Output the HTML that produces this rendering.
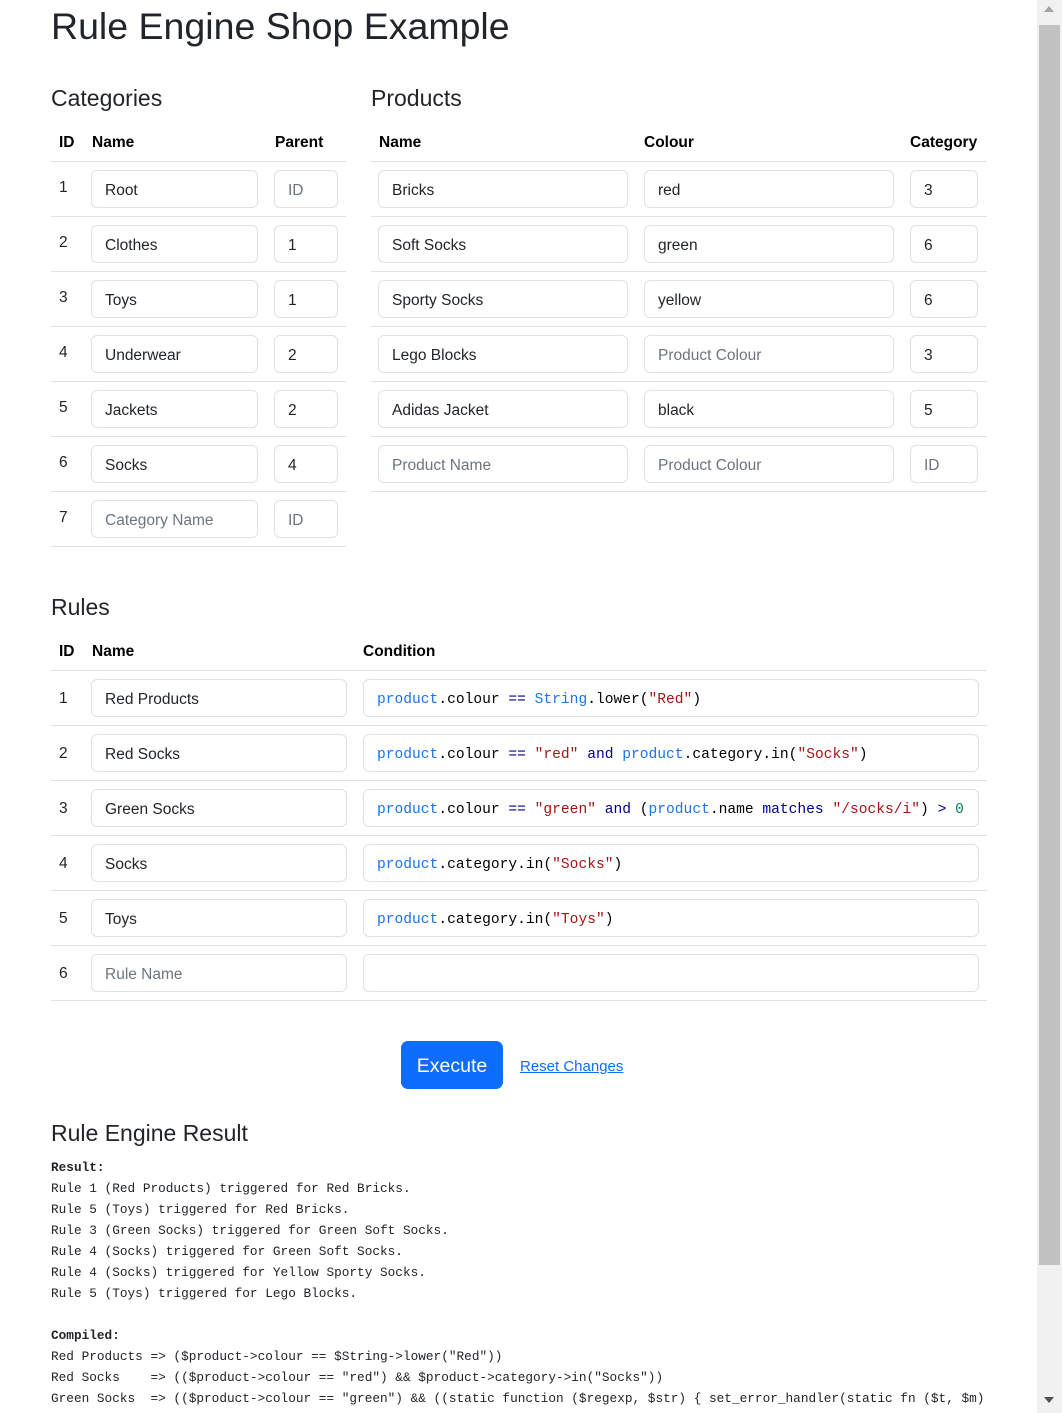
<!DOCTYPE html>
<html><head><meta charset="utf-8"><style>
body{margin:0;width:1062px;height:1413px;overflow:hidden;background:#fff;font-family:"Liberation Sans",sans-serif;color:#212529;position:relative}
.a{position:absolute;white-space:nowrap}
.in{position:absolute;height:38px;border:1px solid #dee2e6;border-radius:6px;box-sizing:border-box;padding:1px 13px 0;line-height:38px;font-size:15.5px;color:#212529;white-space:nowrap;overflow:hidden}
.ph{color:#6c757d}
.hr{position:absolute;height:1px;background:#dee2e6}
.th{position:absolute;font-weight:bold;font-size:15.5px;line-height:20px;color:#000}
.id{position:absolute;font-size:15.5px;line-height:20px}
h2{position:absolute;margin:0;font-weight:normal;font-size:23px;line-height:30px}
.code{font-family:"Liberation Mono",monospace;font-size:14.6px;color:#000}
.v{color:#1a73e8}.o{color:#00008b}.s{color:#a31515}.n{color:#098658}
pre{position:absolute;margin:0;font-family:"Liberation Mono",monospace;font-size:12.75px;line-height:21px;color:#212529}
</style></head><body>
<div class="a" style="left:51px;top:3px;font-size:37.5px;line-height:46px;font-weight:500">Rule Engine Shop Example</div>

<h2 style="left:51px;top:83px">Categories</h2>
<h2 style="left:371px;top:83px">Products</h2>

<div class="th" style="left:59px;top:133px">ID</div>
<div class="th" style="left:92px;top:133px">Name</div>
<div class="th" style="left:275px;top:133px">Parent</div>
<div class="hr" style="left:51px;width:295px;top:161px"></div>
<div class="hr" style="left:51px;width:295px;top:216px"></div>
<div class="hr" style="left:51px;width:295px;top:271px"></div>
<div class="hr" style="left:51px;width:295px;top:326px"></div>
<div class="hr" style="left:51px;width:295px;top:381px"></div>
<div class="hr" style="left:51px;width:295px;top:436px"></div>
<div class="hr" style="left:51px;width:295px;top:491px"></div>
<div class="hr" style="left:51px;width:295px;top:546px"></div>

<div class="id" style="left:59px;top:178px">1</div><div class="in" style="left:91px;width:167px;top:170px">Root</div><div class="in ph" style="left:274px;width:64px;top:170px">ID</div>
<div class="id" style="left:59px;top:233px">2</div><div class="in" style="left:91px;width:167px;top:225px">Clothes</div><div class="in" style="left:274px;width:64px;top:225px">1</div>
<div class="id" style="left:59px;top:288px">3</div><div class="in" style="left:91px;width:167px;top:280px">Toys</div><div class="in" style="left:274px;width:64px;top:280px">1</div>
<div class="id" style="left:59px;top:343px">4</div><div class="in" style="left:91px;width:167px;top:335px">Underwear</div><div class="in" style="left:274px;width:64px;top:335px">2</div>
<div class="id" style="left:59px;top:398px">5</div><div class="in" style="left:91px;width:167px;top:390px">Jackets</div><div class="in" style="left:274px;width:64px;top:390px">2</div>
<div class="id" style="left:59px;top:453px">6</div><div class="in" style="left:91px;width:167px;top:445px">Socks</div><div class="in" style="left:274px;width:64px;top:445px">4</div>
<div class="id" style="left:59px;top:508px">7</div><div class="in ph" style="left:91px;width:167px;top:500px">Category Name</div><div class="in ph" style="left:274px;width:64px;top:500px">ID</div>

<div class="th" style="left:379px;top:133px">Name</div>
<div class="th" style="left:644px;top:133px">Colour</div>
<div class="th" style="left:910px;top:133px">Category</div>
<div class="hr" style="left:371px;width:616px;top:161px"></div>
<div class="hr" style="left:371px;width:616px;top:216px"></div>
<div class="hr" style="left:371px;width:616px;top:271px"></div>
<div class="hr" style="left:371px;width:616px;top:326px"></div>
<div class="hr" style="left:371px;width:616px;top:381px"></div>
<div class="hr" style="left:371px;width:616px;top:436px"></div>
<div class="hr" style="left:371px;width:616px;top:491px"></div>

<div class="in" style="left:378px;width:250px;top:170px">Bricks</div><div class="in" style="left:644px;width:250px;top:170px">red</div><div class="in" style="left:910px;width:68px;top:170px">3</div>
<div class="in" style="left:378px;width:250px;top:225px">Soft Socks</div><div class="in" style="left:644px;width:250px;top:225px">green</div><div class="in" style="left:910px;width:68px;top:225px">6</div>
<div class="in" style="left:378px;width:250px;top:280px">Sporty Socks</div><div class="in" style="left:644px;width:250px;top:280px">yellow</div><div class="in" style="left:910px;width:68px;top:280px">6</div>
<div class="in" style="left:378px;width:250px;top:335px">Lego Blocks</div><div class="in ph" style="left:644px;width:250px;top:335px">Product Colour</div><div class="in" style="left:910px;width:68px;top:335px">3</div>
<div class="in" style="left:378px;width:250px;top:390px">Adidas Jacket</div><div class="in" style="left:644px;width:250px;top:390px">black</div><div class="in" style="left:910px;width:68px;top:390px">5</div>
<div class="in ph" style="left:378px;width:250px;top:445px">Product Name</div><div class="in ph" style="left:644px;width:250px;top:445px">Product Colour</div><div class="in ph" style="left:910px;width:68px;top:445px">ID</div>

<h2 style="left:51px;top:592px">Rules</h2>
<div class="th" style="left:59px;top:642px">ID</div>
<div class="th" style="left:92px;top:642px">Name</div>
<div class="th" style="left:363px;top:642px">Condition</div>
<div class="hr" style="left:51px;width:936px;top:670px"></div>
<div class="hr" style="left:51px;width:936px;top:725px"></div>
<div class="hr" style="left:51px;width:936px;top:780px"></div>
<div class="hr" style="left:51px;width:936px;top:835px"></div>
<div class="hr" style="left:51px;width:936px;top:890px"></div>
<div class="hr" style="left:51px;width:936px;top:945px"></div>
<div class="hr" style="left:51px;width:936px;top:1000px"></div>

<div class="id" style="left:59px;top:689px">1</div><div class="in" style="left:91px;width:256px;top:679px">Red Products</div>
<div class="in code" style="left:363px;width:616px;top:679px"><span class="v">product</span>.colour <span class="o">==</span> <span class="v">String</span>.lower(<span class="s">"Red"</span>)</div>
<div class="id" style="left:59px;top:744px">2</div><div class="in" style="left:91px;width:256px;top:734px">Red Socks</div>
<div class="in code" style="left:363px;width:616px;top:734px"><span class="v">product</span>.colour <span class="o">==</span> <span class="s">"red"</span> <span class="o">and</span> <span class="v">product</span>.category.in(<span class="s">"Socks"</span>)</div>
<div class="id" style="left:59px;top:799px">3</div><div class="in" style="left:91px;width:256px;top:789px">Green Socks</div>
<div class="in code" style="left:363px;width:616px;top:789px"><span class="v">product</span>.colour <span class="o">==</span> <span class="s">"green"</span> <span class="o">and</span> (<span class="v">product</span>.name <span class="o">matches</span> <span class="s">"/socks/i"</span>) <span class="o">&gt;</span> <span class="n">0</span></div>
<div class="id" style="left:59px;top:854px">4</div><div class="in" style="left:91px;width:256px;top:844px">Socks</div>
<div class="in code" style="left:363px;width:616px;top:844px"><span class="v">product</span>.category.in(<span class="s">"Socks"</span>)</div>
<div class="id" style="left:59px;top:909px">5</div><div class="in" style="left:91px;width:256px;top:899px">Toys</div>
<div class="in code" style="left:363px;width:616px;top:899px"><span class="v">product</span>.category.in(<span class="s">"Toys"</span>)</div>
<div class="id" style="left:59px;top:964px">6</div><div class="in ph" style="left:91px;width:256px;top:954px">Rule Name</div>
<div class="in code" style="left:363px;width:616px;top:954px"></div>

<div class="a" style="left:401px;top:1041px;width:102px;height:48px;background:#0d6efd;border-radius:7px;color:#fff;font-size:19.5px;line-height:50px;text-align:center">Execute</div>
<div class="a" style="left:520px;top:1057px;font-size:15px;line-height:20px;color:#0d6efd;text-decoration:underline">Reset Changes</div>

<h2 style="left:51px;top:1118px">Rule Engine Result</h2>
<pre style="left:51px;top:1157px"><b>Result:</b>
Rule 1 (Red Products) triggered for Red Bricks.
Rule 5 (Toys) triggered for Red Bricks.
Rule 3 (Green Socks) triggered for Green Soft Socks.
Rule 4 (Socks) triggered for Green Soft Socks.
Rule 4 (Socks) triggered for Yellow Sporty Socks.
Rule 5 (Toys) triggered for Lego Blocks.

<b>Compiled:</b>
Red Products =&gt; ($product-&gt;colour == $String-&gt;lower("Red"))
Red Socks    =&gt; (($product-&gt;colour == "red") &amp;&amp; $product-&gt;category-&gt;in("Socks"))
Green Socks  =&gt; (($product-&gt;colour == "green") &amp;&amp; ((static function ($regexp, $str) { set_error_handler(static fn ($t, $m)</pre>

<div class="a" style="left:1037px;top:0;width:25px;height:1413px;background:#f1f1f1"></div>
<div class="a" style="left:1039px;top:25px;width:21px;height:1240px;background:#c1c1c1"></div>
<div class="a" style="left:1044px;top:6px;width:0;height:0;border-left:5px solid transparent;border-right:5px solid transparent;border-bottom:6px solid #a3a3a3"></div>
<div class="a" style="left:1044px;top:1397px;width:0;height:0;border-left:5px solid transparent;border-right:5px solid transparent;border-top:6px solid #505050"></div>
</body></html>
